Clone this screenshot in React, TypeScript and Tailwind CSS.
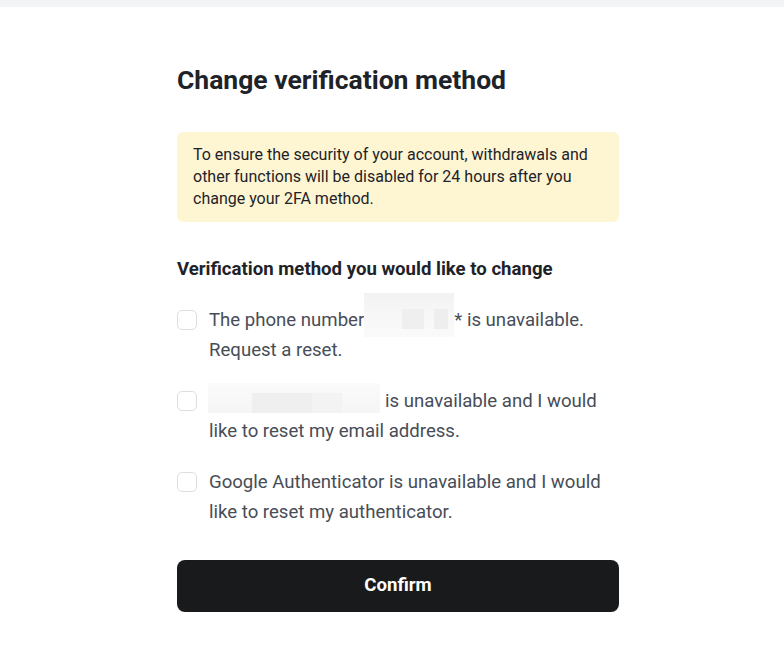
function Box() {
  return (
    <span className="mt-[5px] h-5 w-5 shrink-0 rounded-[5px] border border-[#dcdee2] bg-white" />
  );
}

export default function App() {
  return (
    <div className="min-h-screen bg-white" style={{ fontFamily: "Roboto, 'Liberation Sans', sans-serif" }}>
      <div className="h-[7px] bg-[#f3f4f5]" />

      <div className="flex justify-center pl-3">
        <main className="w-[442px] pt-[57px] pb-10">
          <h1 className="text-[26.5px] font-bold leading-8 text-[#1e2329]">Change verification method</h1>

          <div className="mt-[36px] rounded-md bg-[#fef6d2] px-4 py-3 text-[16px] leading-[22px] text-[#1e2329]">
            To ensure the security of your account, withdrawals and other functions will be disabled for 24 hours after you change your 2FA method.
          </div>

          <h2 className="mt-[35px] text-[18.6px] font-bold leading-6 text-[#1e2329]">
            Verification method you would like to change
          </h2>

          <div className="mt-6 flex flex-col gap-[21px] text-[18.6px] leading-[30px] text-[#474d57]">
            {/* phone - masked number */}
            <label className="flex gap-3">
              <Box />
              <span>
                The phone number
                <span className="-mt-3 -mb-[2px] inline-flex h-[44px] w-[90px] items-end gap-[10px] bg-gradient-to-b from-[#f2f2f2] via-[#f7f7f7] to-[#fafafa] pb-2 pl-[38px] align-top">
                  <span className="h-[20px] w-[22px] bg-[#efefef]" />
                  <span className="h-[20px] w-[14px] bg-[#eeeeee]" />
                </span>
                * is unavailable. Request a reset.
              </span>
            </label>

            {/* email - masked address */}
            <label className="flex gap-3">
              <Box />
              <span>
                <span className="-mt-[3px] -ml-px mr-[5px] mb-[3px] inline-flex h-[30px] w-[172px] items-end bg-gradient-to-b from-[#fbfbfb] to-[#f5f5f5] pl-[44px] align-top">
                  <span className="h-[20px] w-[60px] bg-[#efefef]" />
                  <span className="h-[20px] w-[30px] bg-[#f3f3f3]" />
                </span>
                is unavailable and I would like to reset my email address.
              </span>
            </label>

            {/* google authenticator */}
            <label className="flex gap-3">
              <Box />
              <span>Google Authenticator is unavailable and I would like to reset my authenticator.</span>
            </label>
          </div>

          <button className="mt-[33px] h-[52px] w-full rounded-lg bg-[#181a1b] text-[18.6px] font-bold text-white">
            Confirm
          </button>
        </main>
      </div>
    </div>
  );
}
